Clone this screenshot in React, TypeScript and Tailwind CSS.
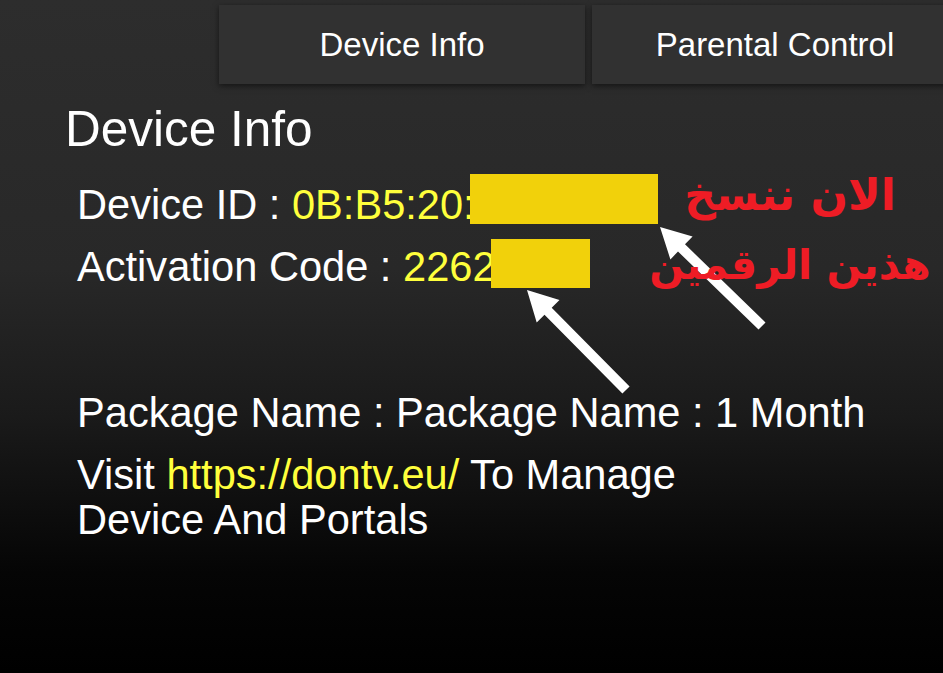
import React from 'react';

const sans = { fontFamily: '"Liberation Sans", Arial, sans-serif' };

const Tab: React.FC<{ label: string }> = ({ label }) => (
  <div className="flex h-[79px] w-[366px] shrink-0 items-center justify-center bg-[#313131] text-[33px] leading-none text-white shadow-[0_2px_6px_rgba(0,0,0,0.55)]">
    {label}
  </div>
);

export default function App() {
  return (
    <div
      className="relative h-[673px] w-[943px] overflow-hidden bg-[linear-gradient(to_bottom,#2d2d2d_0%,#282828_40%,#1a1a1a_62%,#050505_85%,#000_100%)] text-white"
      style={sans}
    >
      {/* Tabs */}
      <div className="flex gap-[7px] pl-[219px] pt-[5px]">
        <Tab label="Device Info" />
        <Tab label="Parental Control" />
      </div>

      <h1 className="mt-[20px] pl-[65px] text-[49.5px] leading-[49px] font-normal">Device Info</h1>

      <div className="mt-[21px] pl-[77px] text-[41.6px]">
        <div className="leading-[62px] whitespace-nowrap">
          Device ID : <span className="text-[#ffff3c]">0B:B5:20:</span>
          <span className="-ml-[5px] inline-block h-[50px] w-[188px] bg-[#f1d10b] align-[-5px]" />
        </div>
        <div className="leading-[62px] whitespace-nowrap">
          Activation Code : <span className="text-[#ffff3c]">2262</span>
          <span className="-ml-[5px] inline-block h-[49px] w-[99px] bg-[#f1d10b] align-[-7px]" />
        </div>

        <div className="mt-[84px] leading-[62px] whitespace-nowrap">
          Package Name : Package Name : 1 Month
        </div>
        <div className="mt-[8px] leading-[45px]">
          Visit <span className="text-[#ffff3c]">https://dontv.eu/</span> To Manage
          <br />
          Device And Portals
        </div>
      </div>

      {/* annotation arrows */}
      <svg className="absolute left-0 top-0" width="943" height="673" viewBox="0 0 943 673">
        <polygon
          fill="#ffffff"
          points="660,227 692.6,236.4 685,244.3 765.5,322.4 758.5,329.6 678,251.5 670.4,259.4"
        />
        <polygon
          fill="#ffffff"
          points="527,290 559.5,300 551.7,307.8 629.6,386.5 622.4,393.5 544.5,314.8 536.7,322.6"
        />
      </svg>

      {/* annotation text */}
      <div
        dir="rtl"
        className="absolute left-[640px] top-[160px] w-[300px] whitespace-nowrap text-center text-[44px] font-bold leading-[70px] text-[#ee1c25]"
        style={{ fontFamily: '"DejaVu Sans", sans-serif' }}
      >
        <div>الان ننسخ</div>
        <div className="text-[41px]">هذين الرقمين</div>
      </div>
    </div>
  );
}
